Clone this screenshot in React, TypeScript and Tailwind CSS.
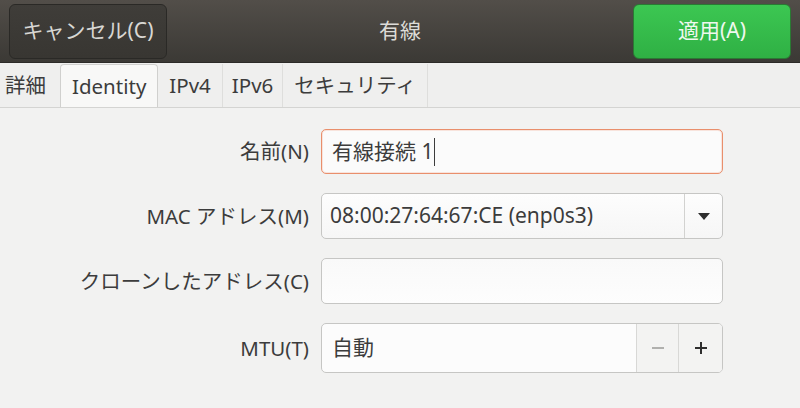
import React from 'react';

const font = { fontFamily: '"Noto Sans", "Noto Sans CJK JP", sans-serif' };

const tabs = [
  { label: '詳細', pad: 'pl-[5px] pr-[14px]' },
  { label: 'Identity', pad: 'px-[11px]' },
  { label: 'IPv4', pad: 'px-[11px]' },
  { label: 'IPv6', pad: 'px-[9px]' },
  { label: 'セキュリティ', pad: 'px-[11px]' },
];

export default function App() {
  return (
    <div className="w-[800px] h-[408px] overflow-hidden bg-[#f2f2f1] text-[#3c3c3c] text-[20.5px]" style={font}>
      {/* Header bar */}
      <div className="h-[63px] flex items-center justify-between px-[9px] bg-gradient-to-b from-[#524e49] to-[#3b3935] border-b border-[#2c2b28]">
        <button className="w-[158px] h-[55px] rounded-[6px] border border-[#2a2926] bg-gradient-to-b from-[#3f3d39] to-[#383632] text-[#d8d7d3] text-[21px]">
          キャンセル(C)
        </button>
        <div className="text-[#dcdbd7] text-[21px]">有線</div>
        <button className="w-[158px] h-[55px] rounded-[6px] border border-[#2a7a33] bg-gradient-to-b from-[#3cc752] to-[#2fb044] text-[#eef8ee] text-[21px]">
          適用(A)
        </button>
      </div>

      {/* Tab bar */}
      <div className="h-[45px] flex items-end bg-[#efefee] border-b border-[#d4d4d2]">
        {tabs.map((t, i) =>
          i === 1 ? (
            <div
              key={t.label}
              className={`h-[43px] ${t.pad} flex items-center bg-[#f8f8f7] border border-b-0 border-[#d0d0ce] rounded-t-[4px] text-[20.5px]`}
            >
              {t.label}
            </div>
          ) : (
            <div
              key={t.label}
              className={`h-[43px] ${t.pad} flex items-center text-[20.5px] ${i === 0 ? '' : 'border-r border-[#dededc]'}`}
            >
              {t.label}
            </div>
          )
        )}
      </div>

      {/* Form */}
      <div className="grid grid-cols-[309px_402px] gap-x-[12px] gap-y-[19px] pt-[21px] items-center">
        <div className="text-right">名前(N)</div>
        <div className="h-[45px] rounded-[5px] border border-[#e98f6c] bg-[#fbfbfb] flex items-center px-[10px] text-[21px] shadow-[inset_0_0_0_1px_rgba(240,160,130,0.25)]">
          有線接続 1<span className="w-px h-[28px] bg-[#3c3c3c] ml-[1px]" />
        </div>

        <div className="text-right">MAC アドレス(M)</div>
        <div className="h-[46px] rounded-[5px] border border-[#c6c6c4] bg-gradient-to-b from-[#fdfdfd] to-[#f6f6f6] flex items-center text-[21px]">
          <div className="flex-1 px-[8px]">08:00:27:64:67:CE (enp0s3)</div>
          <div className="w-[38px] h-full border-l border-[#d2d2d0] flex items-center justify-center">
            <svg width="12" height="7" viewBox="0 0 12 7">
              <path d="M0 0 L12 0 L6 7 Z" fill="#2e2e2e" />
            </svg>
          </div>
        </div>

        <div className="text-right">クローンしたアドレス(C)</div>
        <div className="h-[46px] rounded-[5px] border border-[#c6c6c4] bg-gradient-to-b from-[#f9f9f9] to-[#fdfdfd]" />

        <div className="text-right">MTU(T)</div>
        <div className="h-[50px] rounded-[5px] border border-[#c6c6c4] bg-[#fcfcfc] flex items-center text-[21px] overflow-hidden">
          <div className="flex-1 px-[10px]">自動</div>
          <div className="w-[42px] h-full border-l border-[#d8d8d6] bg-[#f3f3f2] flex items-center justify-center">
            <svg width="14" height="14" viewBox="0 0 14 14">
              <path d="M1 7 H13" stroke="#b0b0ae" strokeWidth="2" />
            </svg>
          </div>
          <div className="w-[44px] h-full border-l border-[#d8d8d6] bg-[#f3f3f2] flex items-center justify-center">
            <svg width="14" height="14" viewBox="0 0 14 14">
              <path d="M1 7 H13 M7 1 V13" stroke="#2e2e2e" strokeWidth="2" />
            </svg>
          </div>
        </div>
      </div>
    </div>
  );
}
